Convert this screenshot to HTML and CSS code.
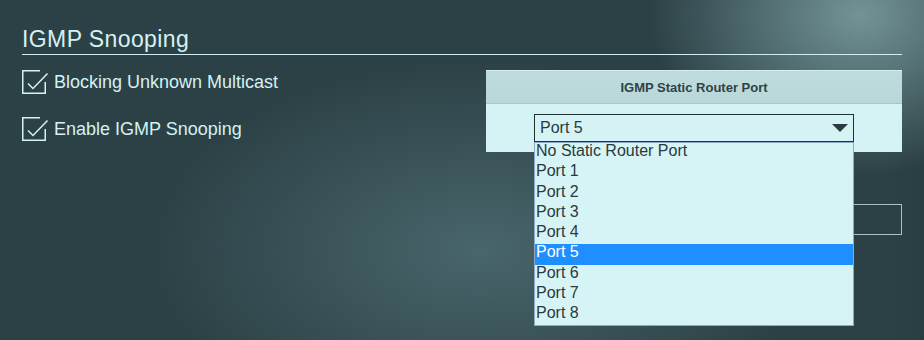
FILE: index.html
```html
<!DOCTYPE html>
<html lang="en">
<head>
    <meta charset="UTF-8">
    <title>IGMP Snooping</title>
    <link rel="stylesheet" href="styles.css">
</head>
<body>
    <div class="page">
        <h1 class="title">IGMP Snooping</h1>
        <div class="content">
            <div class="options">
                <label class="check">
                    <svg class="check-box" width="28" height="24" viewBox="0 0 28 24">
                        <path d="M18 0.75 H0.75 V23.25 H23.25 V12" fill="none" stroke="#d4f1f3" stroke-width="1.5"/>
                        <path d="M6 13.5 L11 18.5 L25.5 3.5" fill="none" stroke="#d4f1f3" stroke-width="1.5"/>
                    </svg>
                    <span>Blocking Unknown Multicast</span>
                </label>
                <label class="check">
                    <svg class="check-box" width="28" height="24" viewBox="0 0 28 24">
                        <path d="M18 0.75 H0.75 V23.25 H23.25 V12" fill="none" stroke="#d4f1f3" stroke-width="1.5"/>
                        <path d="M6 13.5 L11 18.5 L25.5 3.5" fill="none" stroke="#d4f1f3" stroke-width="1.5"/>
                    </svg>
                    <span>Enable IGMP Snooping</span>
                </label>
            </div>
            <div class="side">
                <table class="router-table">
                    <tr><th>IGMP Static Router Port</th></tr>
                    <tr>
                        <td>
                            <div class="select">
                                <span class="select-value">Port 5</span>
                                <span class="select-arrow"></span>
                                <ul class="select-list">
                                    <li>No Static Router Port</li>
                                    <li>Port 1</li>
                                    <li>Port 2</li>
                                    <li>Port 3</li>
                                    <li>Port 4</li>
                                    <li class="active">Port 5</li>
                                    <li>Port 6</li>
                                    <li>Port 7</li>
                                    <li>Port 8</li>
                                </ul>
                            </div>
                        </td>
                    </tr>
                </table>
                <div class="apply-box"></div>
            </div>
        </div>
    </div>
</body>
</html>
```

FILE: styles.css
```css
html, body {
    height: 100%;
}
body {
    margin: 0;
    font-family: "Liberation Sans", Arial, sans-serif;
    color: #d4f1f3;
    background-color: #2c4146;
    background-image:
        radial-gradient(ellipse 210px 160px at 860px 15px, rgba(118, 152, 155, 0.95), rgba(118, 152, 155, 0)),
        radial-gradient(ellipse 330px 190px at 480px 250px, rgba(82, 114, 120, 0.75), rgba(82, 114, 120, 0)),
        linear-gradient(90deg, rgba(40, 60, 64, 0) 0%, rgba(40, 60, 64, 0) 96%, rgba(40, 60, 64, 0.7) 100%);
    overflow: hidden;
}
.page {
    width: 880px;
    padding: 25px 22px 0;
}
.title {
    margin: 0;
    font-size: 23px;
    font-weight: normal;
    line-height: 28px;
    letter-spacing: 0.4px;
    padding-bottom: 1px;
    border-bottom: 1px solid #cdeff3;
}
.content {
    display: flex;
    margin-top: 15px;
}
.options {
    width: 464px;
    display: flex;
    flex-direction: column;
    gap: 23px;
}
.check {
    display: flex;
    align-items: center;
    height: 24px;
    font-size: 18px;
    line-height: 24px;
}
.check-box {
    display: block;
    margin-right: 4px;
}
.side {
    width: 416px;
}
.router-table {
    width: 100%;
    border-collapse: collapse;
}
.router-table th {
    height: 32px;
    padding: 0;
    font-size: 13px;
    color: #2f4245;
    background: linear-gradient(#bfdcdd, #b9d7d8);
    border-top: 1px solid #d9eeee;
}
.router-table td {
    padding: 10px 48px;
    background-color: #d5f3f5;
    border-top: 1px solid #a9c6c8;
}
.select {
    position: relative;
    height: 26px;
    border: 1px solid #1f3236;
    display: flex;
    align-items: center;
    padding: 0 5px;
    color: #2b3a3c;
    font-size: 16px;
}
.select-value {
    flex: 1;
}
.select-arrow {
    width: 0;
    height: 0;
    border-left: 8px solid transparent;
    border-right: 8px solid transparent;
    border-top: 8px solid #2a3b3e;
}
.select-list {
    position: absolute;
    top: 100%;
    left: -1px;
    width: 318px;
    margin: 1px 0 0;
    padding: 0;
    list-style: none;
    background-color: #d6f4f6;
    border: 1px solid #8ea9c6;
    z-index: 2;
}
.select-list li {
    height: 20.25px;
    line-height: 15px;
    padding-left: 1px;
    color: #2b3a3c;
}
.select-list li.active {
    background-color: #1f8fff;
    color: #fff;
}
.apply-box {
    width: 300px;
    height: 29px;
    margin: 52px 0 0 auto;
    border: 1px solid #a3c3c6;
}
```
